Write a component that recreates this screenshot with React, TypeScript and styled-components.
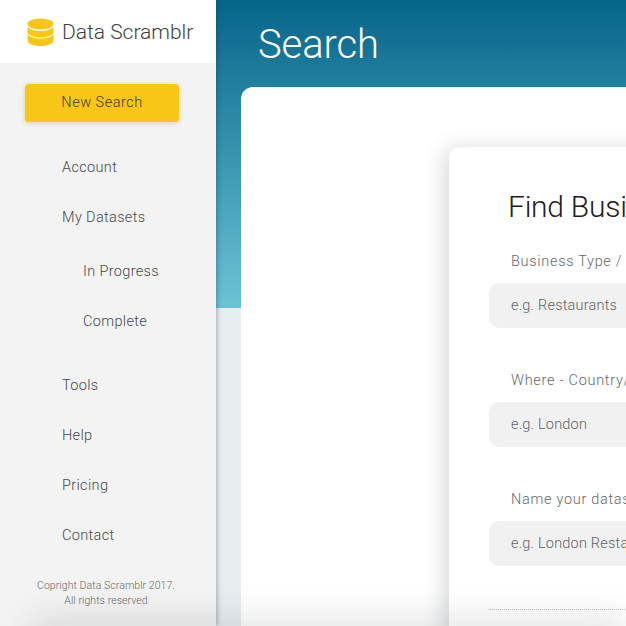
import styled, { createGlobalStyle } from 'styled-components';

const GlobalStyle = createGlobalStyle`
  html, body {
    margin: 0;
    height: 100%;
    overflow: hidden;
    background: #e8edf0;
  }
  * {
    box-sizing: border-box;
  }
`;

const Page = styled.div`
  position: relative;
  display: flex;
  width: 626px;
  height: 626px;
  overflow: hidden;
  font-family: Roboto, 'Liberation Sans', sans-serif;
`;

const Sidebar = styled.aside`
  display: flex;
  flex-direction: column;
  flex: 0 0 216px;
  background: #f3f3f3;
  box-shadow: 1px 0 5px rgba(40, 50, 60, 0.38);
  z-index: 1;
`;

const Brand = styled.div`
  display: flex;
  align-items: center;
  gap: 8px;
  height: 63px;
  padding-left: 27px;
  background: #fff;
`;

const BrandName = styled.span`
  font-size: 21px;
  font-weight: 300;
  color: #3f4144;
`;

const NewSearch = styled.button`
  width: 154px;
  height: 38px;
  margin: 21px 0 0 25px;
  padding: 0 0 2px;
  border: 0;
  border-radius: 4px;
  background: #f8c617;
  box-shadow: 0 1px 5px rgba(200, 160, 20, 0.45);
  font: inherit;
  font-size: 14.5px;
  font-weight: 300;
  letter-spacing: 0.5px;
  color: #3f3b28;
`;

const Nav = styled.nav`
  display: flex;
  flex-direction: column;
  margin-top: 21px;
`;

const NavItem = styled.a<{ $sub?: boolean; $gap?: number }>`
  display: block;
  height: 50px;
  line-height: 50px;
  margin-top: ${(p) => p.$gap ?? 0}px;
  padding-left: ${(p) => (p.$sub ? 83 : 62)}px;
  font-size: 14.5px;
  font-weight: 300;
  letter-spacing: 0.35px;
  color: #47494c;
`;

const Copyright = styled.p`
  margin: 17px 0 0;
  padding-right: 4px;
  text-align: center;
  font-size: 10.5px;
  font-weight: 300;
  line-height: 15px;
  letter-spacing: 0.07px;
  color: #66686a;
`;

const Main = styled.main`
  flex: 1;
  min-width: 0;
  padding-left: 25px;
  background: linear-gradient(180deg, #05658a 0%, #6cc3d5 100%) no-repeat 0 0 / 100% 308px, #e8edf0;
`;

const Title = styled.h1`
  height: 87px;
  margin: 0;
  padding-left: 17px;
  font-size: 40px;
  font-weight: 300;
  line-height: 90px;
  letter-spacing: -0.1px;
  color: #fff;
`;

const Panel = styled.section`
  width: 600px;
  height: 560px;
  padding: 60px 0 0 208px;
  background: #fff;
  border-radius: 12px 0 0 0;
`;

const Card = styled.div`
  width: 560px;
  height: 520px;
  padding: 40px 0 0 40px;
  background: #fff;
  border-radius: 10px 0 0 0;
  box-shadow: -4px 2px 22px rgba(40, 50, 60, 0.2);
`;

const Heading = styled.h2`
  margin: 0 0 16px 19px;
  font-size: 30px;
  font-weight: 300;
  line-height: 40px;
  letter-spacing: -0.25px;
  white-space: nowrap;
  color: #1d2023;
`;

const Field = styled.div`
  margin-bottom: 34px;
`;

const Label = styled.div`
  height: 40px;
  padding-left: 22px;
  font-size: 14.5px;
  font-weight: 300;
  line-height: 38px;
  letter-spacing: 0.7px;
  white-space: nowrap;
  color: #66686a;
`;

const Input = styled.div`
  width: 500px;
  height: 45px;
  padding-left: 22px;
  border-radius: 10px;
  background: #f1f1f1;
  font-size: 14.5px;
  font-weight: 300;
  line-height: 45px;
  letter-spacing: 0.2px;
  color: #616365;
`;

const Divider = styled.hr`
  width: 500px;
  margin: 43px 0 0;
  border: 0;
  border-top: 1px dotted #bdbdbd;
`;

const BottomFade = styled.div`
  position: absolute;
  left: 30px;
  right: 0;
  bottom: -30px;
  height: 30px;
  box-shadow: 0 -8px 34px rgba(40, 50, 60, 0.14);
  z-index: 2;
`;

const Logo = () => (
  <svg width="27" height="28" viewBox="0 0 27 28">
    <ellipse cx="13.5" cy="6" rx="13" ry="5.5" fill="#f8c617" />
    <path d="M.5 8.500C3 12 8 13 13.500 13s10.500-1 13-4.500V14c0 3-5.800 5.500-13 5.500S.5 17 .5 14z" fill="#f8c617" />
    <path d="M.5 16c2.500 3.500 7.500 4.500 13 4.500s10.500-1 13-4.500v6.500c0 3-5.800 5.500-13 5.500s-13-2.500-13-5.500z" fill="#f8c617" />
  </svg>
);

const App = () => {
  return (
    <>
      <GlobalStyle />
      <Page>
        <Sidebar>
          <Brand>
            <Logo />
            <BrandName>Data Scramblr</BrandName>
          </Brand>
          <NewSearch>New Search</NewSearch>
          <Nav>
            <NavItem>Account</NavItem>
            <NavItem>My Datasets</NavItem>
            <NavItem $sub $gap={4}>In Progress</NavItem>
            <NavItem $sub>Complete</NavItem>
            <NavItem $gap={14}>Tools</NavItem>
            <NavItem>Help</NavItem>
            <NavItem>Pricing</NavItem>
            <NavItem>Contact</NavItem>
          </Nav>
          <Copyright>
            Copright Data Scramblr 2017.
            <br />
            All rights reserved
          </Copyright>
        </Sidebar>
        <Main>
          <Title>Search</Title>
          <Panel>
            <Card>
              <Heading>Find Business</Heading>
              <Field>
                <Label>Business Type / Industry</Label>
                <Input>e.g. Restaurants</Input>
              </Field>
              <Field>
                <Label>Where - Country/City</Label>
                <Input>e.g. London</Input>
              </Field>
              <Field>
                <Label>Name your dataset</Label>
                <Input>e.g. London Restaurants</Input>
              </Field>
              <Divider />
            </Card>
          </Panel>
        </Main>
        <BottomFade />
      </Page>
    </>
  );
};

export default App;
